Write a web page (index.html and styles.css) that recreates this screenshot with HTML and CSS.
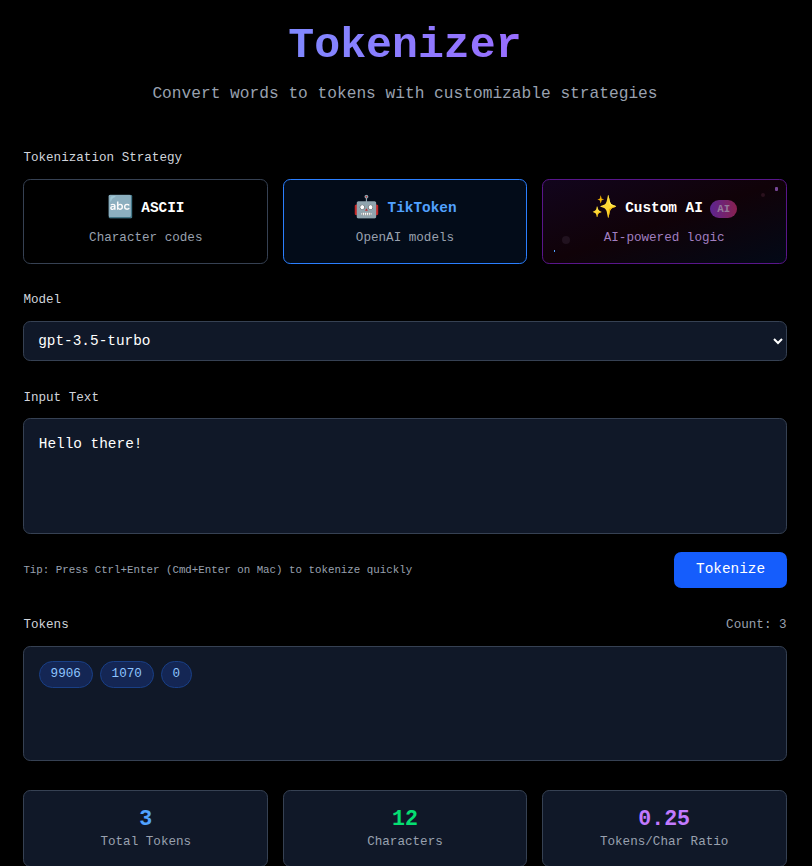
FILE: index.html
```html
<!DOCTYPE html>
<html lang="en">
<head>
<meta charset="utf-8">
<title>Tokenizer</title>
<link rel="stylesheet" href="styles.css">
</head>
<body>
<main class="container">
  <header class="header">
    <h1 class="title">Tokenizer</h1>
    <p class="subtitle">Convert words to tokens with customizable strategies</p>
  </header>

  <section class="strategy">
    <div class="label">Tokenization Strategy</div>
    <div class="grid">
      <div class="card">
        <div class="card-head"><span class="emoji">🔤</span><span>ASCII</span></div>
        <div class="card-desc">Character codes</div>
      </div>
      <div class="card card-active">
        <div class="card-head"><span class="emoji">🤖</span><span>TikToken</span></div>
        <div class="card-desc">OpenAI models</div>
      </div>
      <div class="card card-ai">
        <i class="dot dot-a"></i><i class="dot dot-b"></i><i class="dot dot-c"></i><i class="dot dot-d"></i>
        <div class="card-head"><span class="emoji">✨</span><span>Custom AI</span><span class="badge">AI</span></div>
        <div class="card-desc">AI-powered logic</div>
      </div>
    </div>
  </section>

  <section class="model">
    <label class="label" for="model">Model</label>
    <select class="select" id="model"><option>gpt-3.5-turbo</option></select>
  </section>

  <section class="input">
    <label class="label" for="text">Input Text</label>
    <textarea class="textarea" id="text" spellcheck="false">Hello there!</textarea>
  </section>

  <div class="actions">
    <span class="tip">Tip: Press Ctrl+Enter (Cmd+Enter on Mac) to tokenize quickly</span>
    <button class="button">Tokenize</button>
  </div>

  <section class="tokens">
    <div class="row"><span class="label">Tokens</span><span class="count">Count: 3</span></div>
    <div class="token-box">
      <span class="token">9906</span><span class="token">1070</span><span class="token">0</span>
    </div>
  </section>

  <section class="grid">
    <div class="stat"><div class="value blue">3</div><div class="stat-label">Total Tokens</div></div>
    <div class="stat"><div class="value green">12</div><div class="stat-label">Characters</div></div>
    <div class="stat"><div class="value purple">0.25</div><div class="stat-label">Tokens/Char Ratio</div></div>
  </section>
</main>
</body>
</html>
```
FILE: styles.css
```css
* { box-sizing: border-box; margin: 0; padding: 0; }
html { background: #000; }
body {
  height: 866px;
  overflow: hidden;
  background: #000;
  color: #fff;
  font-family: "Liberation Mono", monospace;
  font-size: 14.4px;
  line-height: 21.6px;
}
.container { width: 763.2px; margin-left: 23.4px; padding-top: 23.6px; }
.header { height: 125px; text-align: center; }
.title {
  font-size: 43.2px;
  line-height: 43.2px;
  margin-bottom: 14.4px;
  background: linear-gradient(to right, #51a2ff, #ad46ff);
  background: linear-gradient(to right in oklab, #51a2ff, #ad46ff);
  -webkit-background-clip: text;
  background-clip: text;
  color: transparent;
}
.subtitle { font-size: 16.2px; line-height: 25.2px; padding-top: 1px; color: #99a1af; }
.label { display: block; font-size: 12.6px; line-height: 18px; color: #d1d5dc; }
.grid { display: grid; grid-template-columns: repeat(3, 1fr); gap: 14.4px; }
.strategy { height: 142px; }
.strategy .label { margin-bottom: 12.6px; }
.card {
  position: relative;
  height: 84.6px;
  padding-top: 14px;
  border: 1px solid #364153;
  border-radius: 7.2px;
  text-align: center;
  overflow: hidden;
}
.card-head {
  display: flex;
  align-items: center;
  justify-content: center;
  gap: 7.2px;
  height: 28.8px;
  font-weight: 700;
}
.emoji { font-size: 21.6px; line-height: 28.8px; font-weight: 400; }
.card-desc { margin-top: 6.2px; font-size: 12.6px; line-height: 18px; color: #99a1af; }
.card-active { border-color: #2b7fff; background: #030c19; color: #51a2ff; }
.card-ai {
  border-color: #59168b;
  background: linear-gradient(to bottom right, #12051d, #100208 50%, #030917);
}
.card-ai .card-desc { color: #a17fc0; }
.badge {
  padding: 0 7.2px;
  margin-top: 1px;
  border-radius: 9px;
  font-size: 10.8px;
  line-height: 18px;
  color: #957a9b;
  background: linear-gradient(to right, #5c2591, #88204f);
}
.dot { position: absolute; border-radius: 50%; }
.dot-a { right: 8px; top: 7px; width: 3px; height: 4px; border-radius: 1px; background: #764694; }
.dot-b { right: 21px; top: 13px; width: 4px; height: 4px; background: #2a111d; }
.dot-c { left: 19px; top: 56px; width: 8px; height: 8px; background: #21121f; }
.dot-d { left: 11px; top: 70px; width: 1px; height: 2px; border-radius: 0; background: #51a2ff; }
.model { height: 98px; }
.model .label { margin-bottom: 12px; }
.select {
  display: block;
  width: 100%;
  height: 40px;
  padding: 0 0 0 9.8px;
  border: 1px solid #364153;
  border-radius: 7.2px;
  background: #101828;
  color: #fff;
  font: 14.4px "Liberation Mono", monospace;
}
.input { height: 164px; }
.input .label { margin-bottom: 11px; }
.textarea {
  display: block;
  width: 100%;
  height: 116px;
  padding: 15.4px 14.4px 13.4px;
  border: 1px solid #364153;
  border-radius: 7.2px;
  background: #101828;
  color: #fff;
  font: 14.4px/21.6px "Liberation Mono", monospace;
  resize: none;
}
.actions { display: flex; align-items: center; justify-content: space-between; height: 36px; margin-top: -1px; margin-bottom: 28px; }
.tip { padding-top: 2px; font-size: 10.8px; line-height: 14.4px; color: #99a1af; }
.button {
  width: 113px;
  height: 36px;
  padding-left: 1px;
  border: 0;
  border-radius: 7.2px;
  background: #155dfc;
  color: #fff;
  font: 14.4px/21.6px "Liberation Mono", monospace;
}
.tokens { height: 174px; }
.row { display: flex; justify-content: space-between; margin-bottom: 12px; }
.count { font-size: 12.6px; line-height: 18px; color: #99a1af; }
.token-box {
  display: flex;
  align-items: flex-start;
  gap: 7.2px;
  height: 115px;
  padding: 14.4px;
  border: 1px solid #364153;
  border-radius: 7.2px;
  background: #101828;
}
.token {
  height: 27px;
  padding: 2.6px 10.8px;
  border: 1px solid #193f86;
  border-radius: 14px;
  background: #142654;
  color: #8ec5ff;
  font-size: 12.6px;
  line-height: 18px;
}
.stat {
  height: 77px;
  padding-top: 15.4px;
  border: 1px solid #364153;
  border-radius: 7.2px;
  background: #101828;
  text-align: center;
}
.value { font-size: 21.6px; line-height: 26px; font-weight: 700; }
.stat-label { padding-top: 1px; font-size: 12.6px; line-height: 18px; color: #99a1af; }
.blue { color: #51a2ff; }
.green { color: #05df72; }
.purple { color: #c27aff; }
```
